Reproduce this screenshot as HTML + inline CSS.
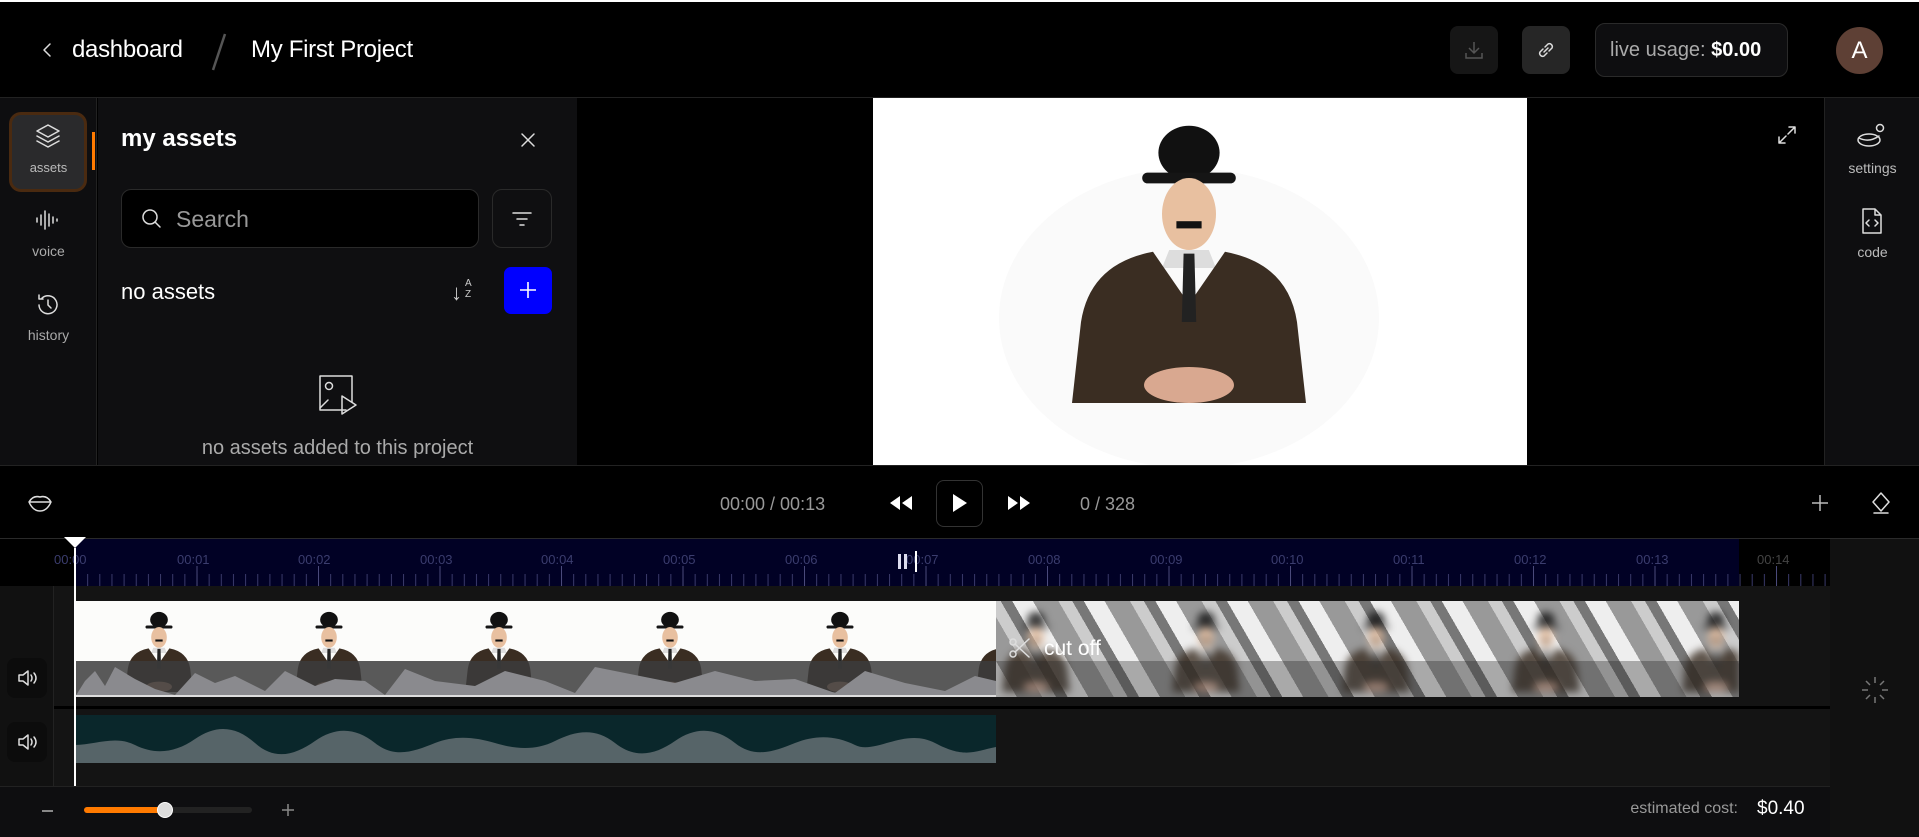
<!DOCTYPE html>
<html><head><meta charset="utf-8"><style>
*{box-sizing:border-box;margin:0;padding:0}
body{width:1919px;height:837px;overflow:hidden;background:#000;font-family:"Liberation Sans",sans-serif;color:#fff;position:relative}
.a{position:absolute}
.ic{stroke:#ddd;fill:none;stroke-width:1.5;stroke-linecap:round;stroke-linejoin:round}
.lbl{font-size:14px;color:#aaa;text-align:center;width:97px}
.tl{position:absolute;top:14px;font-size:13px;color:#3b3d6e}
</style></head><body>
<svg width="0" height="0" style="position:absolute"><defs>
<g id="fig">
<ellipse cx="0" cy="-128" rx="34" ry="30" fill="#111"/>
<rect x="-52" y="-106" width="104" height="12" rx="6" fill="#151515"/>
<ellipse cx="0" cy="-60" rx="30" ry="40" fill="#e8c0a0"/>
<rect x="-14" y="-52" width="28" height="8" fill="#111"/>
<path d="M-22-20 L22-20 L30 0 L-30 0Z" fill="#ddd"/>
<path d="M-40-18 Q-110-5-120 60 L-130 150 L130 150 L120 60 Q110-5 40-18 L0 40Z" fill="#3a2d22"/>
<path d="M-6-16 L6-16 L8 60 L-8 60Z" fill="#222"/>
<ellipse cx="0" cy="130" rx="50" ry="20" fill="#d9a890"/>
</g>
</defs></svg>

<div class="a" style="left:0;top:0;width:1919px;height:2px;background:#fff"></div>
<div class="a" style="left:0;top:97px;width:1919px;height:1px;background:#222"></div>
<svg class="a" style="left:40px;top:40px" width="16" height="20"><path class="ic" d="M10 4 L4 10 L10 16" stroke="#ccc"/></svg>
<div class="a" style="left:72px;top:36px;font-size:24px;letter-spacing:-0.3px">dashboard</div>
<svg class="a" style="left:205px;top:32px" width="26" height="40"><path d="M20 2 L8 38" stroke="#555" stroke-width="2.5"/></svg>
<div class="a" style="left:251px;top:36px;font-size:24px;letter-spacing:-0.3px">My First Project</div>
<div class="a" style="left:1450px;top:26px;width:48px;height:48px;border-radius:8px;background:#161616"></div>
<svg class="a" style="left:1462px;top:38px" width="24" height="24"><path d="M12 4v11M7 10l5 5 5-5M4 15v5h16v-5" stroke="#555" fill="none" stroke-width="1.5"/></svg>
<div class="a" style="left:1522px;top:26px;width:48px;height:48px;border-radius:8px;background:#262626"></div>
<svg class="a" style="left:1534px;top:38px" width="24" height="24"><path class="ic" d="M10 14 L14 10M9 11 L6 14a3 3 0 0 0 4 4l3-3M15 13l3-3a3 3 0 0 0-4-4l-3 3"/></svg>
<div class="a" style="left:1595px;top:23px;width:193px;height:54px;border-radius:10px;background:#0e0e10;border:1px solid #2a2a2a"></div>
<div class="a" style="left:1610px;top:39px;font-size:20px;color:#aaa">live usage: <b style="color:#fff">$0.00</b></div>
<div class="a" style="left:1836px;top:27px;width:47px;height:47px;border-radius:50%;background:#5e4035;font-size:24px;text-align:center;line-height:47px">A</div>

<div class="a" style="left:0;top:98px;width:97px;height:368px;background:#0e0e10;border-right:1px solid #222"></div>
<div class="a" style="left:9px;top:112px;width:78px;height:80px;border-radius:12px;border:3px solid #4a2a10;background:#2a2a2c"></div>
<svg class="a" style="left:34px;top:122px" width="28" height="28"><path class="ic" d="M14 3 L25 9 L14 15 L3 9Z M3 14 L14 20 L25 14 M3 19 L14 25 L25 19"/></svg>
<div class="a lbl" style="left:0;top:160px;font-size:13px;color:#bbb">assets</div>
<div class="a" style="left:92px;top:132px;width:3px;height:38px;background:#ff7a00"></div>
<svg class="a" style="left:34px;top:208px" width="28" height="24"><path class="ic" d="M3 10v4M7 7v10M11 3v18M15 6v12M19 9v6M23 11v2"/></svg>
<div class="a lbl" style="left:0;top:243px">voice</div>
<svg class="a" style="left:35px;top:292px" width="26" height="26"><path class="ic" d="M4 13a9 9 0 1 0 3-7M4 3v4h4M13 8v5l3 3"/></svg>
<div class="a lbl" style="left:0;top:327px">history</div>

<div class="a" style="left:98px;top:98px;width:479px;height:368px;background:#0f0f11"></div>
<div class="a" style="left:121px;top:125px;font-size:24px;font-weight:bold">my assets</div>
<svg class="a" style="left:520px;top:132px" width="16" height="16"><path class="ic" d="M2 2L14 14M14 2L2 14"/></svg>
<div class="a" style="left:121px;top:189px;width:358px;height:59px;border-radius:10px;background:#000;border:1px solid #2a2a2a"></div>
<svg class="a" style="left:140px;top:207px" width="24" height="24"><circle cx="10" cy="10" r="7" class="ic" stroke="#aaa"/><path d="M15 15l5 5" class="ic" stroke="#aaa"/></svg>
<div class="a" style="left:176px;top:206px;font-size:23px;color:#999">Search</div>
<div class="a" style="left:492px;top:189px;width:60px;height:59px;border-radius:10px;border:1px solid #2a2a2a"></div>
<svg class="a" style="left:510px;top:207px" width="24" height="24"><path class="ic" d="M3 6h18M7 12h10M10 18h4" stroke="#bbb"/></svg>
<div class="a" style="left:121px;top:279px;font-size:22px">no assets</div>
<div class="a" style="left:451px;top:280px;font-size:22px;color:#ccc">↓</div>
<div class="a" style="left:465px;top:278px;font-size:10px;color:#ccc;line-height:11px">A<br>Z</div>
<div class="a" style="left:504px;top:267px;width:48px;height:47px;border-radius:7px;background:#0000ff"></div>
<svg class="a" style="left:518px;top:280px" width="20" height="20"><path d="M10 2v16M2 10h16" stroke="#fff" stroke-width="1.6"/></svg>
<svg class="a" style="left:316px;top:372px" width="44" height="46"><path d="M30 38H4V4h32v26" class="ic" stroke="#aaa" stroke-width="2"/><circle cx="13" cy="14" r="3.5" class="ic" stroke="#aaa" stroke-width="2"/><path d="M4 36l8-8M26 24v18l14-9z" class="ic" stroke="#aaa" stroke-width="2"/></svg>
<div class="a" style="left:98px;top:437px;width:479px;text-align:center;font-size:20px;color:#aaa">no assets added to this project</div>

<div class="a" style="left:873px;top:98px;width:654px;height:368px;background:#fff;overflow:hidden">
<svg width="654" height="368"><ellipse cx="316" cy="220" rx="190" ry="150" fill="#fafafa"/><use href="#fig" transform="translate(316,170) scale(0.9)"/></svg>
</div>
<svg class="a" style="left:1775px;top:123px" width="24" height="24"><path class="ic" d="M14 4h6v6M20 4l-7 7M10 20H4v-6M4 20l7-7"/></svg>

<div class="a" style="left:1824px;top:98px;width:95px;height:368px;background:#0e0e10;border-left:1px solid #222"></div>
<svg class="a" style="left:1856px;top:120px" width="32" height="30"><ellipse cx="13" cy="20" rx="11" ry="6" class="ic"/><path d="M3 18q10 5 20-2" class="ic"/><circle cx="24" cy="8" r="3.5" class="ic"/></svg>
<div class="a lbl" style="left:1824px;top:160px;color:#bbb">settings</div>
<svg class="a" style="left:1860px;top:206px" width="24" height="30"><path class="ic" d="M3 3h12l6 6v18H3z M15 3v6h6 M9 14l-3 3 3 3M15 14l3 3-3 3"/></svg>
<div class="a lbl" style="left:1824px;top:244px;color:#bbb">code</div>

<div class="a" style="left:0;top:465px;width:1919px;height:1px;background:#222"></div>
<svg class="a" style="left:27px;top:492px" width="26" height="22"><path class="ic" stroke="#fff" d="M2 10q4-7 11-5q7-2 11 5q-4 9-11 9q-7 0-11-9zM2 10h22"/></svg>
<div class="a" style="left:720px;top:494px;font-size:18px;color:#999">00:00 / 00:13</div>
<svg class="a" style="left:888px;top:494px" width="26" height="18"><path d="M12 2L2 9l10 7zM24 2L14 9l10 7z" fill="#fff"/></svg>
<div class="a" style="left:936px;top:480px;width:47px;height:47px;border-radius:8px;border:1px solid #333"></div>
<svg class="a" style="left:950px;top:492px" width="20" height="22"><path d="M3 2L17 11 3 20z" fill="#fff"/></svg>
<svg class="a" style="left:1006px;top:494px" width="26" height="18"><path d="M2 2l10 7-10 7zM14 2l10 7-10 7z" fill="#fff"/></svg>
<div class="a" style="left:1080px;top:494px;font-size:18px;color:#999">0 / 328</div>
<svg class="a" style="left:1810px;top:493px" width="20" height="20"><path d="M10 2v16M2 10h16" stroke="#bbb" stroke-width="1.5"/></svg>
<svg class="a" style="left:1868px;top:490px" width="26" height="26"><path class="ic" stroke="#fff" d="M13 3l8 9-8 9-8-9zM6 23h14"/></svg>

<div class="a" style="left:0;top:538px;width:1919px;height:1px;background:#2a2a2a"></div>
<div class="a" style="left:1830px;top:539px;width:89px;height:298px;background:#111"></div>
<div class="a" style="left:75px;top:539px;width:1664px;height:47px;background:#010125"></div>
<div class="a" style="left:0;top:538px;width:1830px;height:48px">
<div class="tl" style="left:54px">00:00</div><div class="tl" style="left:177px">00:01</div><div class="tl" style="left:298px">00:02</div><div class="tl" style="left:420px">00:03</div><div class="tl" style="left:541px">00:04</div><div class="tl" style="left:663px">00:05</div><div class="tl" style="left:785px">00:06</div><div class="tl" style="left:906px">00:07</div><div class="tl" style="left:1028px">00:08</div><div class="tl" style="left:1150px">00:09</div><div class="tl" style="left:1271px">00:10</div><div class="tl" style="left:1393px">00:11</div><div class="tl" style="left:1514px">00:12</div><div class="tl" style="left:1636px">00:13</div><div class="tl" style="left:1757px;color:#444">00:14</div>
<svg class="a" style="left:75px;top:28px" width="1755" height="20"><defs><pattern id="tk" width="12.15" height="20" patternUnits="userSpaceOnUse"><rect x="0" y="8" width="1" height="12" fill="#3a3a6a"/></pattern><pattern id="tk2" width="121.5" height="20" patternUnits="userSpaceOnUse"><rect x="0" y="0" width="1" height="20" fill="#4a4a7a"/></pattern></defs><rect width="1755" height="20" fill="url(#tk)"/><rect width="1755" height="20" fill="url(#tk2)"/></svg>
</div>
<div class="a" style="left:898px;top:554px;width:3px;height:15px;background:#dde"></div>
<div class="a" style="left:904px;top:554px;width:3px;height:15px;background:#dde"></div>
<div class="a" style="left:915px;top:551px;width:2px;height:21px;background:#fff"></div>

<div class="a" style="left:0;top:586px;width:1830px;height:200px;background:#141414"></div>
<div class="a" style="left:0;top:586px;width:54px;height:200px;background:#111;border-right:1px solid #222"></div>
<div class="a" style="left:54px;top:706px;width:1776px;height:3px;background:#000"></div>
<div class="a" style="left:75px;top:601px;width:921px;height:96px;background:#fcfcfa;overflow:hidden">
<svg width="921" height="96">
<g transform="translate(84,52) scale(0.26)"><use href="#fig"/></g><g transform="translate(254,52) scale(0.26)"><use href="#fig"/></g><g transform="translate(424,52) scale(0.26)"><use href="#fig"/></g><g transform="translate(595,52) scale(0.26)"><use href="#fig"/></g><g transform="translate(765,52) scale(0.26)"><use href="#fig"/></g><g transform="translate(935,52) scale(0.26)"><use href="#fig"/></g>
<rect x="0" y="60" width="921" height="36" fill="rgba(60,60,60,0.85)"/>
<path d="M0 96 L10 80 L20 70 L30 85 L40 66 L60 78 L80 88 L100 94 L120 72 L140 82 L160 75 L190 90 L210 70 L240 85 L260 78 L290 80 L310 94 L330 68 L360 80 L400 85 L430 70 L470 80 L500 92 L520 66 L560 74 L600 82 L640 70 L680 80 L720 78 L760 92 L790 70 L830 82 L870 90 L900 75 L921 80 L921 96Z" fill="#8a8a8e"/>
<rect x="0" y="94" width="921" height="2" fill="#ddd"/>
</svg></div>
<div class="a" style="left:996px;top:601px;width:743px;height:96px;overflow:hidden;background:repeating-linear-gradient(60deg,#eee 0 18px,#999 18px 40px,#ccc 40px 52px,#777 52px 62px)">
<svg width="743" height="96" style="filter:blur(4px)"><g transform="translate(40,52) scale(0.26)" opacity="0.8"><use href="#fig"/></g><g transform="translate(210,52) scale(0.26)" opacity="0.8"><use href="#fig"/></g><g transform="translate(380,52) scale(0.26)" opacity="0.8"><use href="#fig"/></g><g transform="translate(550,52) scale(0.26)" opacity="0.8"><use href="#fig"/></g><g transform="translate(720,52) scale(0.26)" opacity="0.8"><use href="#fig"/></g></svg>
<div class="a" style="left:0;top:60px;width:743px;height:36px;background:rgba(40,40,40,0.35)"></div>
</div>
<svg class="a" style="left:1008px;top:636px" width="24" height="24"><circle cx="5" cy="6" r="3" class="ic" stroke="#fff"/><circle cx="5" cy="18" r="3" class="ic" stroke="#fff"/><path class="ic" stroke="#fff" d="M7 8L21 21M7 16L21 3"/></svg>
<div class="a" style="left:1044px;top:637px;font-size:21px;color:#fff">cut off</div>
<div class="a" style="left:75px;top:715px;width:921px;height:48px;background:#0a272b;overflow:hidden">
<svg width="921" height="48"><path d="M0 30 C20 30 40 20 60 30 S100 38 120 24 S160 10 180 28 S220 40 240 26 S280 12 300 28 S340 36 360 28 S400 22 420 28 S460 36 480 26 S520 12 540 28 S580 40 600 26 S640 12 660 28 S700 36 720 28 S760 20 780 30 S830 12 860 28 S900 36 921 32 L921 48 L0 48Z" fill="#566468"/></svg></div>
<div class="a" style="left:7px;top:658px;width:40px;height:40px;border-radius:8px;background:#0c0c0c"></div>
<div class="a" style="left:7px;top:722px;width:40px;height:40px;border-radius:8px;background:#0c0c0c"></div>
<svg class="a" style="left:15px;top:666px" width="24" height="24"><path class="ic" stroke="#ccc" d="M4 9h4l5-4v14l-5-4H4zM16 9q2 3 0 6M19 7q4 5 0 10"/></svg>
<svg class="a" style="left:15px;top:730px" width="24" height="24"><path class="ic" stroke="#ccc" d="M4 9h4l5-4v14l-5-4H4zM16 9q2 3 0 6M19 7q4 5 0 10"/></svg>
<div class="a" style="left:74px;top:548px;width:2px;height:238px;background:#fff"></div>
<svg class="a" style="left:64px;top:537px" width="22" height="12"><path d="M0 0h22L11 11z" fill="#fff"/></svg>
<svg class="a" style="left:1860px;top:675px" width="30" height="30"><g stroke="#777" stroke-width="1.5"><path d="M15 2v6M15 22v6M2 15h6M22 15h6M6 6l4 4M20 20l4 4M24 6l-4 4M10 20l-4 4"/></g></svg>

<div class="a" style="left:0;top:786px;width:1830px;height:51px;background:#0e0e10;border-top:1px solid #222"></div>
<div class="a" style="left:42px;top:810px;width:11px;height:1.5px;background:#888"></div>
<div class="a" style="left:84px;top:807px;width:168px;height:6px;border-radius:3px;background:#222"></div>
<div class="a" style="left:84px;top:807px;width:82px;height:6px;border-radius:3px;background:#ff7a00"></div>
<div class="a" style="left:157px;top:802px;width:16px;height:16px;border-radius:50%;background:#ddd;border:1px solid #fff"></div>
<svg class="a" style="left:281px;top:803px" width="14" height="14"><path d="M7 1v12M1 7h12" stroke="#888" stroke-width="1.5"/></svg>
<div class="a" style="left:1600px;top:800px;width:138px;text-align:right;font-size:16px;color:#999">estimated cost:</div>
<div class="a" style="left:1757px;top:798px;font-size:19px;color:#fff">$0.40</div>
</body></html>
